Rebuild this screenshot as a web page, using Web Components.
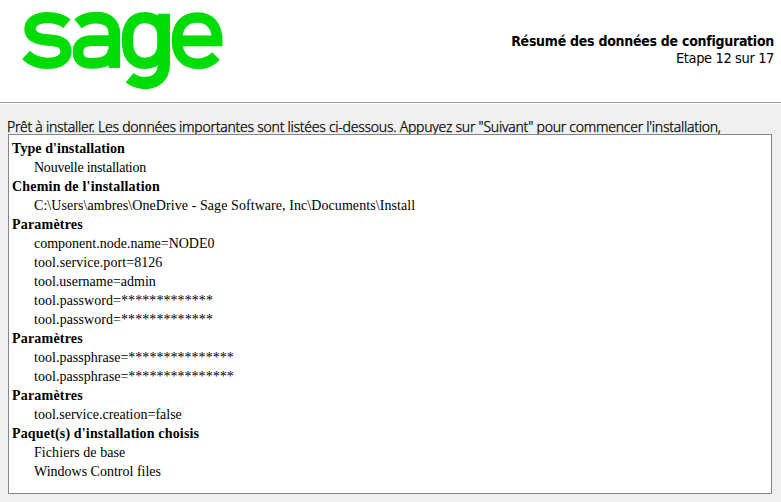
<!DOCTYPE html>
<html lang="fr">
<head>
<meta charset="utf-8">
<title>Installation</title>
<style>
html, body { margin: 0; height: 100%; overflow: hidden; }
</style>
</head>
<body>
<setup-window></setup-window>
<script>
function define(name, html) {
  const template = document.createElement('template');
  template.innerHTML = html;
  customElements.define(name, class extends HTMLElement {
    constructor() {
      super();
      this.attachShadow({ mode: 'open' }).appendChild(template.content.cloneNode(true));
    }
  });
}

define('brand-logo', `
<style>
:host { display: block; width: 240px; height: 100px; }
svg { display: block; fill: none; stroke: #00dc06; }
</style>
<svg width="240" height="100" viewBox="0 0 720 300" aria-label="sage">
  <path stroke-width="34" d="M201 71C186 59 166 53 144 53C110 53 90 66 90 87C90 112 115 118 143 120C175 122 198 127 198 154C198 178 175 190 142 190C116 190 95 181 78 165"/>
  <path d="M234 71C250 58 269 53 288 53C323 53 343 69 343 101V204" stroke-width="35"/>
  <path d="M343 122H277C248 122 234 134 234 156C234 179 248 190 276 190C312 190 334 182 340 150" stroke-width="32"/>
  <path d="M489 130V112C489 75 467 53 434 53C400 53 382 78 382 121C382 166 400 190 434 190C467 190 489 168 489 130" stroke-width="34"/>
  <path d="M491.500 41V192C491.500 230 467 249 434 249C415 249 402 244 389 233" stroke-width="37"/>
  <path d="M532 122.500H651.500C652 78 630 52.500 592 52.500C554 52.500 531 78 531 122C531 166 556 191.500 594 191.500C615 191.500 633 184 648 168" stroke-width="32"/>
</svg>`);

define('step-title', `
<style>
:host { display: flex; flex-direction: column; align-items: flex-end; font: 14.500px/17px "DejaVu Sans Condensed", "Noto Sans", sans-serif; white-space: nowrap; }
b { font-size: 14px; letter-spacing: -.27px; }
span { letter-spacing: -.38px; }
</style>
<b><slot name="title"></slot></b>
<span><slot name="step"></slot></span>`);

define('setup-header', `
<style>
:host { display: flex; justify-content: space-between; height: 102px; box-sizing: content-box; background: #fff; border-bottom: 1px solid #a0a0a0; box-shadow: 0 1px #fff; }
step-title { padding: 33px 7px 0 0; }
</style>
<brand-logo></brand-logo>
<step-title>
  <span slot="title">Résumé des données de configuration</span>
  <span slot="step">Etape 12 sur 17</span>
</step-title>`);

define('summary-group', `
<style>
:host { display: block; }
h2 { margin: 0; font: inherit; font-weight: bold; letter-spacing: var(--heading-spacing, .16px); }
div { padding-left: 22px; }
::slotted(p) { margin: 0; }
</style>
<h2><slot name="heading"></slot></h2>
<div><slot></slot></div>`);

define('summary-panel', `
<style>
:host { display: block; box-sizing: border-box; background: #fff; border: 1px solid #828790; padding: 4px 3px; font: 14px/19px "Liberation Serif", serif; white-space: nowrap; }
</style>
<slot></slot>`);

define('setup-window', `
<style>
:host { display: flex; flex-direction: column; width: 781px; height: 502px; background: #f0f0f0; color: #000; }
.intro { margin: 16px 0 0 7px; height: 15px; font: 300 14px/15px "Noto Sans", sans-serif; letter-spacing: -.26px; -webkit-text-stroke: .25px #000; white-space: nowrap; }
summary-panel { width: 764px; height: 360px; margin-left: 8px; }
.tight { letter-spacing: -.24px; }
.wide { letter-spacing: .07px; }
.secret { letter-spacing: .07px; }
.phrase { letter-spacing: .03px; }
</style>
<setup-header></setup-header>
<div class="intro">Prêt à installer. Les données importantes sont listées ci-dessous. Appuyez sur "Suivant" pour commencer l'installation,</div>
<summary-panel>
  <summary-group style="--heading-spacing:.08px"><span slot="heading">Type d'installation</span><p class="tight">Nouvelle installation</p></summary-group>
  <summary-group style="--heading-spacing:.2px"><span slot="heading">Chemin de l'installation</span><p class="wide">C:\\Users\\ambres\\OneDrive - Sage Software, Inc\\Documents\\Install</p></summary-group>
  <summary-group style="--heading-spacing:.2px"><span slot="heading">Paramètres</span><p>component.node.name=NODE0</p><p class="wide">tool.service.port=8126</p><p>tool.username=admin</p><p class="secret">tool.password=*************</p><p class="secret">tool.password=*************</p></summary-group>
  <summary-group style="--heading-spacing:.2px"><span slot="heading">Paramètres</span><p class="phrase">tool.passphrase=***************</p><p class="phrase">tool.passphrase=***************</p></summary-group>
  <summary-group style="--heading-spacing:.2px"><span slot="heading">Paramètres</span><p>tool.service.creation=false</p></summary-group>
  <summary-group><span slot="heading">Paquet(s) d'installation choisis</span><p class="wide">Fichiers de base</p><p>Windows Control files</p></summary-group>
</summary-panel>`);
</script>
</body>
</html>
